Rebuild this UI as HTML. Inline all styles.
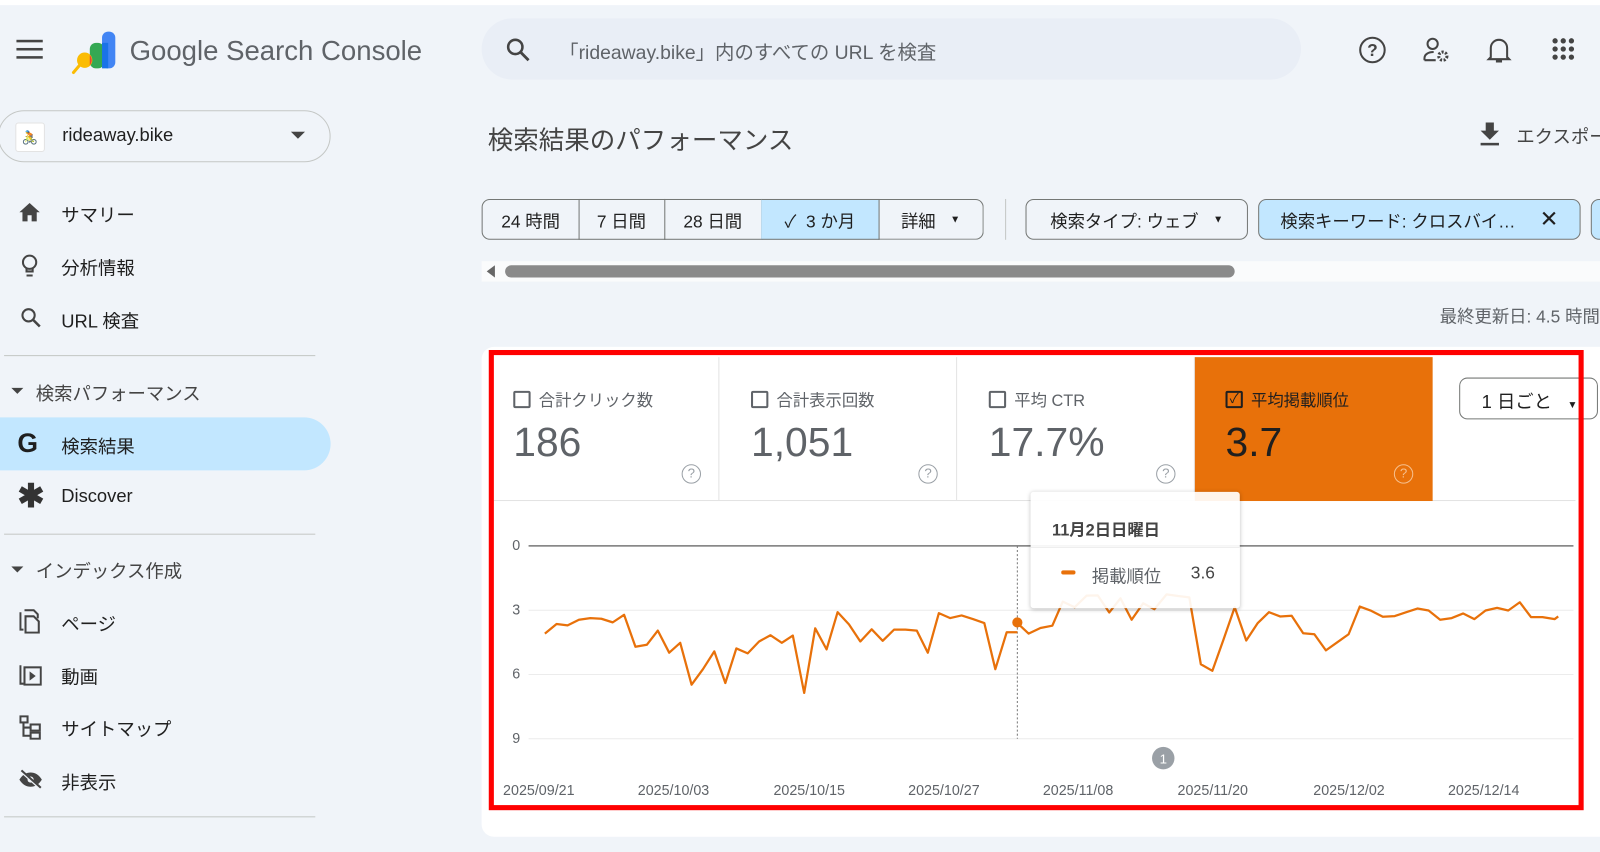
<!DOCTYPE html>
<html><head><meta charset="utf-8"><style>
*{margin:0;padding:0;box-sizing:border-box}
body{width:1600px;height:835px;overflow:hidden;background:#f0f4f9;font-family:"Liberation Sans","Noto Sans CJK JP",sans-serif;color:#1f1f1f;position:relative}
#w{position:absolute;left:0;top:0;width:1568px;height:819px;transform:scale(1.0204);transform-origin:0 0}
.a{position:absolute}
.nav{position:absolute;left:60px;font-size:18px;color:#1f1f1f}
.ic{position:absolute;left:18px}
.chip{position:absolute;top:195px;height:40px;border:1px solid #747775;font-size:17px;display:flex;align-items:center;justify-content:center;color:#1f1f1f}
.tile{position:absolute;top:350px;height:141px;border-right:1px solid #e3e3e3}
.lab{position:absolute;top:379px;font-size:16px;color:#5f6368;display:flex;align-items:center}
.cb{width:17px;height:17px;border:2px solid #5f6368;border-radius:2px;margin-right:8px}
.val{position:absolute;top:412px;font-size:40px;color:#5f6368}
.q{position:absolute;top:455px;width:19px;height:19px;border:1.5px solid #9aa0a6;border-radius:50%;font-size:13px;color:#9aa0a6;text-align:center;line-height:16px}
.xl{position:absolute;top:766px;font-size:14px;color:#5f6368}
.yl{position:absolute;left:502px;font-size:14px;color:#5f6368}
</style></head><body><div id="w">
<div class="a" style="left:0;top:0;width:1600px;height:5px;background:#fff"></div>
<svg class="a" style="left:16px;top:38px" width="26" height="20"><rect y="1" width="26" height="2.5" fill="#444"/><rect y="9" width="26" height="2.5" fill="#444"/><rect y="17" width="26" height="2.5" fill="#444"/></svg>
<svg class="a" style="left:70px;top:28px" width="46" height="46"><rect x="30" y="3" width="13" height="36" rx="6" fill="#4285f4"/><rect x="18" y="14" width="14" height="25" rx="6" fill="#34a853"/><rect x="30" y="14" width="6" height="25" fill="#1a73e8"/><circle cx="13" cy="31" r="7.5" fill="#fbbc04"/><path d="M18 26a7.5 7.5 0 0 1 0 10z" fill="#ea4335"/><line x1="8" y1="36" x2="2" y2="43" stroke="#fbbc04" stroke-width="3" stroke-linecap="round"/></svg>
<div class="a" style="left:127px;top:35px;font-size:27px;color:#5f6368">Google Search Console</div>
<div class="a" style="left:472px;top:18px;width:803px;height:60px;background:#e9eef6;border-radius:30px"></div>
<svg class="a" style="left:495px;top:36px" width="26" height="26"><circle cx="10" cy="10" r="7" fill="none" stroke="#444" stroke-width="2.5"/><line x1="15" y1="15" x2="23" y2="23" stroke="#444" stroke-width="2.8"/></svg>
<div class="a" style="left:548px;top:37px;font-size:19px;color:#5f6368">「rideaway.bike」内のすべての URL を検査</div>
<svg class="a" style="left:1330px;top:34px" width="30" height="30"><circle cx="15" cy="15" r="12" fill="none" stroke="#444" stroke-width="2"/><text x="15" y="21" font-size="17" text-anchor="middle" fill="#444" font-family="Liberation Sans" font-weight="bold">?</text></svg>
<svg class="a" style="left:1393px;top:34px" width="30" height="30"><circle cx="11" cy="9" r="5" fill="none" stroke="#444" stroke-width="2"/><path d="M3 25v-2c0-4 4-6 9-6" fill="none" stroke="#444" stroke-width="2"/><line x1="3" y1="25" x2="14" y2="25" stroke="#444" stroke-width="2"/><circle cx="21" cy="21" r="4" fill="none" stroke="#444" stroke-width="3" stroke-dasharray="2 1.5"/></svg>
<svg class="a" style="left:1456px;top:34px" width="26" height="30"><path d="M5 22V13a8 8 0 0 1 16 0v9l2 2H3z" fill="none" stroke="#444" stroke-width="2"/><path d="M10 26h6" stroke="#444" stroke-width="2.5"/></svg>
<svg class="a" style="left:1521px;top:37px" width="24" height="24" fill="#444"><circle cx="3" cy="3" r="2.6"/><circle cx="11" cy="3" r="2.6"/><circle cx="19" cy="3" r="2.6"/><circle cx="3" cy="11" r="2.6"/><circle cx="11" cy="11" r="2.6"/><circle cx="19" cy="11" r="2.6"/><circle cx="3" cy="19" r="2.6"/><circle cx="11" cy="19" r="2.6"/><circle cx="19" cy="19" r="2.6"/></svg>
<div class="a" style="left:-2px;top:108px;width:326px;height:51px;border:1px solid #c4c7c5;border-radius:26px"></div>
<div class="a" style="left:15px;top:120px;width:29px;height:29px;background:#fff;border:1px solid #e3e3e3;border-radius:3px;font-size:13px;text-align:center;line-height:27px;color:#4a7bd0">🚴</div>
<div class="a" style="left:61px;top:122px;font-size:18px;color:#1f1f1f">rideaway.bike</div>
<svg class="a" style="left:285px;top:129px" width="14" height="8"><path d="M0 0h14L7 7z" fill="#444"/></svg>
<svg class="ic" style="top:198px" width="22" height="20"><path d="M11 1L1 10h3v9h5v-6h4v6h5v-9h3z" fill="#444"/></svg>
<div class="nav" style="top:197px">サマリー</div>
<svg class="ic" style="top:248px;left:20px" width="20" height="24"><circle cx="9" cy="9" r="6.5" fill="none" stroke="#444" stroke-width="2"/><path d="M6 15v3h6v-3" fill="none" stroke="#444" stroke-width="2"/><line x1="6" y1="22" x2="12" y2="22" stroke="#444" stroke-width="2"/></svg>
<div class="nav" style="top:249px">分析情報</div>
<svg class="ic" style="top:301px;left:20px" width="22" height="22"><circle cx="8" cy="8" r="6" fill="none" stroke="#444" stroke-width="2"/><line x1="12.5" y1="12.5" x2="19" y2="19" stroke="#444" stroke-width="2.5"/></svg>
<div class="nav" style="top:301px">URL 検査</div>
<div class="a" style="left:4px;top:348px;width:305px;height:1px;background:#c4c7c5"></div>
<svg class="a" style="left:11px;top:380px" width="12" height="7"><path d="M0 0h12L6 6z" fill="#444"/></svg>
<div class="nav" style="left:35px;top:372px;color:#444">検索パフォーマンス</div>
<div class="a" style="left:0;top:409px;width:324px;height:52px;background:#c2e7ff;border-radius:0 26px 26px 0"></div>
<div class="a" style="left:17px;top:420px;font-size:26px;font-weight:bold;color:#1f1f1f;line-height:28px">G</div>
<div class="nav" style="top:424px">検索結果</div>
<div class="a" style="left:17px;top:470px;font-size:32px;font-weight:bold;color:#333;line-height:32px">✱</div>
<div class="nav" style="top:476px">Discover</div>
<div class="a" style="left:4px;top:523px;width:305px;height:1px;background:#c4c7c5"></div>
<svg class="a" style="left:11px;top:555px" width="12" height="7"><path d="M0 0h12L6 6z" fill="#444"/></svg>
<div class="nav" style="left:35px;top:546px;color:#444">インデックス作成</div>
<svg class="ic" style="top:597px;left:19px" width="22" height="24"><path d="M1 3v17h3M5 1h9l4 4v4" fill="none" stroke="#444" stroke-width="2"/><path d="M6 7h8l5 5v11H6z" fill="none" stroke="#444" stroke-width="2"/></svg>
<div class="nav" style="top:598px">ページ</div>
<svg class="ic" style="top:650px;left:19px" width="22" height="22"><path d="M1 2v18h3" fill="none" stroke="#444" stroke-width="2"/><rect x="5" y="4" width="16" height="17" fill="none" stroke="#444" stroke-width="2"/><path d="M10 8v9l6-4.5z" fill="#444"/></svg>
<div class="nav" style="top:650px">動画</div>
<svg class="ic" style="top:701px;left:19px" width="22" height="24"><rect x="1" y="1" width="7" height="6" fill="none" stroke="#444" stroke-width="2"/><rect x="11" y="9" width="9" height="6" fill="none" stroke="#444" stroke-width="2"/><rect x="11" y="17" width="9" height="6" fill="none" stroke="#444" stroke-width="2"/><path d="M4 7v13h7M4 12h7" fill="none" stroke="#444" stroke-width="2"/></svg>
<div class="nav" style="top:701px">サイトマップ</div>
<svg class="ic" style="top:754px;left:17px" width="26" height="20"><path d="M2 10c3-5 7-7 11-7s8 2 11 7c-3 5-7 7-11 7S5 15 2 10z" fill="#444"/><circle cx="13" cy="10" r="3" fill="#f0f4f9"/><line x1="3" y1="1" x2="23" y2="19" stroke="#f0f4f9" stroke-width="3"/><line x1="4" y1="1" x2="23" y2="18" stroke="#444" stroke-width="2"/></svg>
<div class="nav" style="top:753px">非表示</div>
<div class="a" style="left:4px;top:800px;width:305px;height:1px;background:#c4c7c5"></div>
<div class="a" style="left:478px;top:118px;font-size:25px;color:#444">検索結果のパフォーマンス</div>
<svg class="a" style="left:1450px;top:119px" width="20" height="24"><path d="M6 1h8v8h5l-9 9-9-9h5z" fill="#444"/><rect x="1" y="21" width="18" height="2.5" fill="#444"/></svg>
<div class="a" style="left:1486px;top:120px;font-size:18px;color:#444;white-space:nowrap">エクスポート</div>
<div class="chip" style="left:472px;width:96px;border-radius:8px 0 0 8px">24 時間</div>
<div class="chip" style="left:567px;width:85px;border-left:none">7 日間</div>
<div class="chip" style="left:651px;width:96px;border-left:none">28 日間</div>
<div class="chip" style="left:746px;width:116px;background:#c2e7ff;border-left:none">✓&nbsp;&nbsp;3 か月</div>
<div class="chip" style="left:861px;width:103px;border-radius:0 8px 8px 0;border-left:none">詳細&nbsp;&nbsp;&nbsp;<span style="font-size:10px">▼</span></div>
<div class="a" style="left:985px;top:195px;width:1px;height:40px;background:#c4c7c5"></div>
<div class="chip" style="left:1005px;width:218px;border-radius:8px">検索タイプ: ウェブ&nbsp;&nbsp;&nbsp;<span style="font-size:10px">▼</span></div>
<div class="chip" style="left:1233px;width:316px;border-radius:8px;background:#c2e7ff">検索キーワード: クロスバイ…&nbsp;&nbsp;&nbsp;&nbsp;&nbsp;<span style="font-size:22px">✕</span></div>
<div class="chip" style="left:1559px;width:60px;border-radius:8px;background:#c2e7ff"></div>
<div class="a" style="left:472px;top:256px;width:1128px;height:20px;background:#fafbfc"></div>
<svg class="a" style="left:476px;top:260px" width="10" height="12"><path d="M9 0v12L1 6z" fill="#666"/></svg>
<div class="a" style="left:495px;top:260px;width:715px;height:12px;background:#8a8a8a;border-radius:6px"></div>
<div class="a" style="left:1411px;top:296px;font-size:17px;color:#5f6368;white-space:nowrap">最終更新日: 4.5 時間前</div>
<div class="a" style="left:472px;top:340px;width:1140px;height:480px;background:#fff;border-radius:12px"></div>
<div class="a" style="left:484px;top:490px;width:1060px;height:1px;background:#e3e3e3"></div>
<div class="tile" style="left:484px;width:221px"></div>
<div class="tile" style="left:705px;width:233px"></div>
<div class="tile" style="left:938px;width:233px"></div>
<div class="tile" style="left:1171px;width:233px;background:#e8710a;border:none"></div>
<div class="lab" style="left:503px"><span class="cb"></span>合計クリック数</div>
<div class="lab" style="left:736px"><span class="cb"></span>合計表示回数</div>
<div class="lab" style="left:969px"><span class="cb"></span>平均 CTR</div>
<div class="lab" style="left:1201px;color:#1f1f1f"><span class="cb" style="border-color:#1f1f1f;font-size:13px;line-height:12px;text-align:center">✓</span>平均掲載順位</div>
<div class="val" style="left:503px">186</div>
<div class="val" style="left:736px">1,051</div>
<div class="val" style="left:969px">17.7%</div>
<div class="val" style="left:1201px;color:#1f1f1f">3.7</div>
<div class="q" style="left:668px">?</div>
<div class="q" style="left:900px">?</div>
<div class="q" style="left:1133px">?</div>
<div class="q" style="left:1366px;border-color:#f6c08f;color:#f6c08f">?</div>
<div class="a" style="left:1430px;top:370px;width:136px;height:41px;border:1px solid #747775;border-radius:8px;font-size:18px;padding:9px 0 0 21px">1 日ごと&nbsp;&nbsp;&nbsp;<span style="font-size:10px">▼</span></div>
<svg class="a" style="left:0;top:0" width="1600" height="835">
<line x1="518" y1="535" x2="1542" y2="535" stroke="#777" stroke-width="1.5"/>
<line x1="518" y1="598" x2="1542" y2="598" stroke="#ececec"/>
<line x1="518" y1="661" x2="1542" y2="661" stroke="#ececec"/>
<line x1="518" y1="724" x2="1542" y2="724" stroke="#ececec"/>
<line x1="997" y1="535" x2="997" y2="724" stroke="#777" stroke-dasharray="2 2"/>
<g transform="translate(471.2,558.9) scale(0.3375,0.323)"><polyline fill="none" stroke="#e8710a" stroke-width="2.2" vector-effect="non-scaling-stroke" stroke-linejoin="round" points="186,192 220,163 252,167 285,150 318,145 350,147 383,158 416,135 449,232 482,226 514,183 547,250 579,220 612,347 645,300 678,246 710,342 742,237 775,252 808,216 841,197 874,220 906,198 939,372 971,176 1004,240 1036,127 1069,164 1102,216 1135,179 1167,214 1200,180 1233,180 1266,183 1298,250 1330,130 1363,145 1396,137 1429,148 1462,160 1494,300 1527,188 1558,188"/></g>
<g transform="translate(990.2,558.9) scale(0.3424,0.323)"><polyline fill="none" stroke="#e8710a" stroke-width="2.2" vector-effect="non-scaling-stroke" stroke-linejoin="round" points="20,160 52,192 86,175 120,168 150,95 184,112 218,77 250,76 283,128 315,85 347,150 380,100 412,118 447,73 480,78 512,82 545,285 578,305 610,210 642,112 675,213 708,160 740,127 772,140 805,138 838,191 870,194 903,243 936,218 968,194 1000,110 1033,123 1066,141 1100,139 1133,127 1165,116 1197,122 1230,150 1263,145 1296,131 1328,148 1360,122 1393,114 1425,122 1458,97 1490,142 1523,142 1558,148 1568,140"/></g>
<circle cx="997" cy="610" r="5" fill="#e8710a"/>
<circle cx="1140" cy="743" r="11" fill="#9aa0a6"/>
<text x="1140" y="748" font-size="13" fill="#fff" text-anchor="middle" font-family="Liberation Sans">1</text>
</svg>
<div class="yl" style="top:526px">0</div><div class="yl" style="top:589px">3</div><div class="yl" style="top:652px">6</div><div class="yl" style="top:715px">9</div>
<div class="xl" style="left:493px">2025/09/21</div><div class="xl" style="left:625px">2025/10/03</div><div class="xl" style="left:758px">2025/10/15</div><div class="xl" style="left:890px">2025/10/27</div><div class="xl" style="left:1022px">2025/11/08</div><div class="xl" style="left:1154px">2025/11/20</div><div class="xl" style="left:1287px">2025/12/02</div><div class="xl" style="left:1419px">2025/12/14</div>
<div class="a" style="left:1010px;top:482px;width:205px;height:114px;background:rgba(255,255,255,0.92);box-shadow:0 1px 4px rgba(0,0,0,0.25);border-radius:3px">
<div style="position:absolute;left:21px;top:24px;font-size:16px;font-weight:bold;color:#444">11月2日日曜日</div>
<div style="position:absolute;left:0;top:54px;width:205px;height:1px;background:#eee"></div>
<div style="position:absolute;left:30px;top:77px;width:14px;height:4px;background:#e8710a;border-radius:2px"></div>
<div style="position:absolute;left:60px;top:69px;font-size:17px;color:#5f6368">掲載順位</div>
<div style="position:absolute;left:157px;top:70px;font-size:17px;color:#444">3.6</div>
</div>
<div class="a" style="left:479px;top:343px;width:1073px;height:451px;border:5px solid #f00"></div>
</div></body></html>
